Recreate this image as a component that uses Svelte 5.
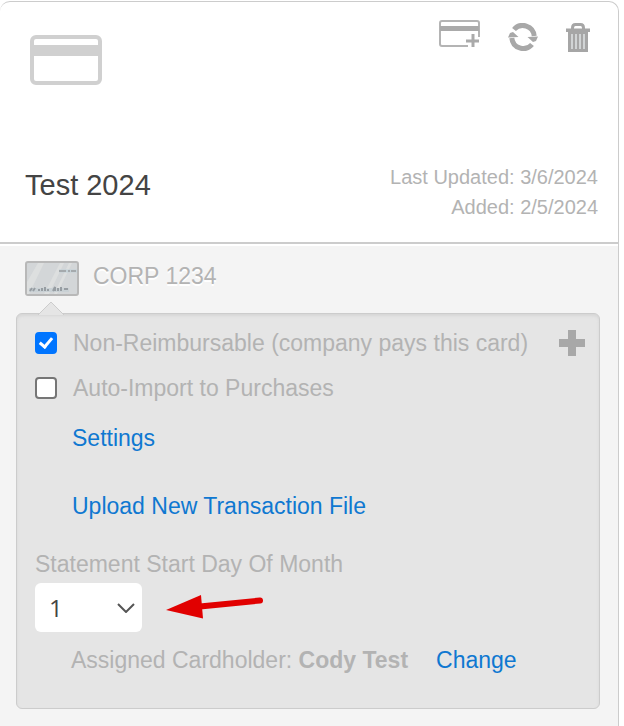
<script lang="ts">
    interface CardAccount {
        name: string
        lastUpdated: string
        added: string
        card: string
        cardholder: string
    }

    const account: CardAccount = {
        name: 'Test 2024',
        lastUpdated: '3/6/2024',
        added: '2/5/2024',
        card: 'CORP 1234',
        cardholder: 'Cody Test',
    }
    const days = Array.from({ length: 31 }, (_, i) => i + 1)

    let nonReimbursable = $state(true)
    let autoImport = $state(false)
    let startDay = $state(1)
</script>

<div class="page">
    <section class="account">
        <header class="account-header">
            <div class="header-top">
                <svg class="account-icon" width="72" height="50" viewBox="0 0 72 50" aria-hidden="true">
                    <rect x="2" y="2" width="68" height="46" rx="4" fill="#fff" stroke="#d0d0d0" stroke-width="4" />
                    <path d="M2 10h68v11H2z" fill="#d0d0d0" />
                </svg>
                <div class="actions">
                    <button class="icon-button" aria-label="Add card">
                        <svg width="41" height="28" viewBox="0 0 41 28">
                            <path d="M29 26H3q-2 0-2-2V3q0-2 2-2h35q2 0 2 2v14" fill="none" stroke="#b4b4b4" stroke-width="2" />
                            <path d="M1 6h39v5H1z" fill="#aaa" />
                            <path d="M34 14v13M27 21h13" stroke="#aaa" stroke-width="3" />
                        </svg>
                    </button>
                    <button class="icon-button refresh" aria-label="Refresh">
                        <svg width="30" height="28" viewBox="0 0 30 28">
                            <g fill="none" stroke="#a8a8a8" stroke-width="5">
                                <path d="M6 6.500A11.500 11.500 0 0 1 26.200 13" />
                                <path d="M24 21.500A11.500 11.500 0 0 1 3.800 15" />
                            </g>
                            <path d="M19.500 14L30 13.500 28 18l-3 1zM10.500 14L0 14.500 2 10l3-1z" fill="#a8a8a8" />
                        </svg>
                    </button>
                    <button class="icon-button trash" aria-label="Delete">
                        <svg width="24" height="30" viewBox="0 0 24 30">
                            <path d="M6.500 6V5q0-3.500 3-3.500h5q3 0 3 3.500v1" fill="none" stroke="#a6a6a6" stroke-width="3" />
                            <path d="M0 5.500h24v3.500H0z" fill="#a6a6a6" />
                            <path d="M2 9h20v20H2z" fill="#a6a6a6" />
                            <path d="M6 11v15M10 11v15M14 11v15M18 11v15" stroke="#dfe3e5" stroke-width="1.500" />
                        </svg>
                    </button>
                </div>
            </div>
            <div class="header-bottom">
                <h1>{account.name}</h1>
                <div class="dates">
                    <div>Last Updated: {account.lastUpdated}</div>
                    <div>Added: {account.added}</div>
                </div>
            </div>
        </header>

        <div class="account-body">
            <div class="card-name">
                <svg width="54" height="35" viewBox="0 0 54 35" aria-hidden="true">
                    <rect x="1" y="1" width="52" height="33" rx="2" fill="#d3d6d8" stroke="#b8b8b8" stroke-width="2" />
                    <path d="M2 21L13 2h6L4 33H2zM19 33L35 2h4L24 33zM29 33L44 2h3L32 33z" fill="#dddfdf" />
                    <path d="M34 10h18" stroke="#c5d2d8" stroke-width="3" />
                    <path d="M34 10h7M43 10h2M46 10h5" stroke="#a5aaad" stroke-width="2" />
                    <path d="M4 29h40" stroke="#c9d1d5" stroke-width="4" />
                    <path d="M5 30l2-3M8 30l2-3M14 30v-2M17 30v-3M20 30v-4M23 30v-2M28 30l2-4v4M33 30v-3M36 30v-4M39 28h4" fill="none" stroke="#979da2" stroke-width="2" />
                </svg>
                <span>{account.card}</span>
            </div>

            <div class="panel">
                <svg class="pointer" width="26" height="14" viewBox="0 0 26 14" aria-hidden="true">
                    <path d="M0 14L13 1l13 13" fill="#e5e5e5" stroke="#ccc" />
                </svg>
                <div class="option-row">
                    <label class="option">
                        <input type="checkbox" bind:checked={nonReimbursable} />
                        <span>Non-Reimbursable (company pays this card)</span>
                    </label>
                    <button class="icon-button" aria-label="Add">
                        <svg width="26" height="26" viewBox="0 0 26 26">
                            <path d="M9 0h8v9h9v8h-9v9H9v-9H0V9h9z" fill="#a8a8a8" />
                        </svg>
                    </button>
                </div>
                <div class="option-row">
                    <label class="option">
                        <input type="checkbox" bind:checked={autoImport} />
                        <span>Auto-Import to Purchases</span>
                    </label>
                </div>
                <div class="links">
                    <a href="#settings">Settings</a>
                    <a href="#upload">Upload New Transaction File</a>
                </div>
                <label class="field-label" for="start-day">Statement Start Day Of Month</label>
                <div class="select-row">
                    <div class="select-box">
                        <select id="start-day" bind:value={startDay}>
                            {#each days as day}
                                <option value={day}>{day}</option>
                            {/each}
                        </select>
                        <svg width="18" height="10" viewBox="0 0 18 10" aria-hidden="true">
                            <path d="M1 1l8 8 8-8" fill="none" stroke="#555" stroke-width="2" />
                        </svg>
                    </div>
                    <svg width="98" height="26" viewBox="0 0 98 26" aria-hidden="true">
                        <path d="M34 11.500l60-6" stroke="#e10000" stroke-width="6" stroke-linecap="round" />
                        <path d="M0 15L35 0l2 23.500z" fill="#e10000" />
                    </svg>
                </div>
                <div class="cardholder">
                    <span>Assigned Cardholder: <strong>{account.cardholder}</strong></span>
                    <a href="#change">Change</a>
                </div>
            </div>
        </div>
    </section>
</div>

<style>
    :global(body) {
        background: #fff;
    }
    .page {
        box-sizing: border-box;
        display: flex;
        min-height: 100vh;
        padding: 1px 5px 0 0;
        font-family: Arial, 'Liberation Sans', sans-serif;
        font-size: 23px;
        line-height: 30px;
        color: #b3b3b3;
    }
    .account {
        display: flex;
        flex-direction: column;
        flex: 1;
        border-top: 1px solid #ccc;
        border-right: 1px solid #ccc;
        border-radius: 10px 10px 0 0;
        overflow: hidden;
    }
    .account-header {
        padding: 18px 20px 20px 25px;
        border-bottom: 2px solid #ccc;
    }
    .header-top {
        display: flex;
        justify-content: space-between;
        align-items: flex-start;
        height: 142px;
    }
    .account-icon {
        margin: 15px 0 0 5px;
    }
    .actions {
        display: flex;
        align-items: flex-start;
        gap: 28px;
        padding-right: 8px;
    }
    .icon-button {
        display: block;
        padding: 0;
        border: 0;
        background: none;
        cursor: pointer;
    }
    .icon-button svg {
        display: block;
    }
    .refresh,
    .trash {
        margin-top: 3px;
    }
    .header-bottom {
        display: flex;
        justify-content: space-between;
        align-items: flex-start;
    }
    h1 {
        margin: 8px 0 0;
        font-size: 29px;
        font-weight: normal;
        line-height: 30px;
        color: #444;
    }
    .dates {
        font-size: 20px;
        text-align: right;
    }
    .account-body {
        flex: 1;
        margin-top: 2px;
        padding: 15px 18px 16px 16px;
        background: #f4f4f4;
    }
    .card-name {
        display: flex;
        align-items: flex-start;
        gap: 14px;
        padding-left: 9px;
        text-shadow: 0 2px 0 #fff;
    }
    .card-name span {
        height: 52px;
    }
    .panel {
        position: relative;
        padding: 14px 14px 33px 18px;
        border: 1px solid #ccc;
        border-radius: 6px;
        background: #e5e5e5;
        box-shadow: inset 0 2px 3px #d6d6d6;
    }
    /* arrow towards the card image */
    .pointer {
        position: absolute;
        top: -13px;
        left: 21px;
    }
    .option-row {
        display: flex;
        justify-content: space-between;
        align-items: center;
        margin-bottom: 15px;
    }
    .option {
        display: flex;
        align-items: center;
        gap: 16px;
    }
    .option input {
        appearance: none;
        box-sizing: border-box;
        display: grid;
        place-items: center;
        flex: none;
        width: 22px;
        height: 22px;
        margin: 0;
        border: 2px solid #767676;
        border-radius: 4px;
        background: #fff;
    }
    .option input:checked {
        border-color: #0075ff;
        background: #0075ff;
    }
    .option input:checked::after {
        content: '';
        width: 5px;
        height: 10px;
        margin-bottom: 3px;
        border: solid #fff;
        border-width: 0 3px 3px 0;
        transform: rotate(40deg);
    }
    .links {
        display: flex;
        flex-direction: column;
        align-items: flex-start;
        gap: 38px;
        padding: 5px 0 28px 37px;
    }
    a {
        color: #0f78d1;
        text-decoration: none;
    }
    .field-label {
        display: block;
        margin-bottom: 4px;
    }
    .select-row {
        display: flex;
        align-items: center;
        gap: 24px;
        margin-bottom: 13px;
    }
    .select-box {
        display: grid;
        align-items: center;
        width: 107px;
    }
    .select-box > * {
        grid-area: 1 / 1;
    }
    .select-box svg {
        justify-self: end;
        margin-right: 7px;
        pointer-events: none;
    }
    select {
        appearance: none;
        width: 100%;
        height: 49px;
        padding: 0 14px;
        border: 0;
        border-radius: 6px;
        background: #fff;
        font-family: 'Open Sans', sans-serif;
        font-size: 24px;
        color: #444;
    }
    .cardholder {
        display: flex;
        gap: 28px;
        padding-left: 36px;
    }
</style>
